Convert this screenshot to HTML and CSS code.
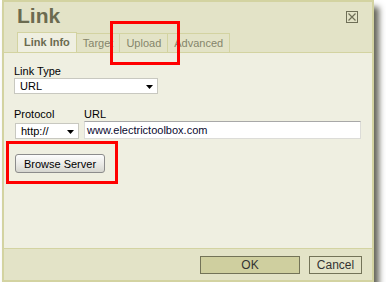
FILE: index.html
```html
<!DOCTYPE html>
<html>
<head>
<meta charset="UTF-8">
<meta name="viewport" content="width=device-width, initial-scale=1">
<link rel="stylesheet" href="styles.css">
</head>
<body>

<div class="dialog">
  <div class="head">
    <div class="title-row">
      <h2 class="title">Link</h2>
      <span class="close">
        <svg width="12" height="12" viewBox="0 0 12 12">
          <rect x="0.5" y="0.5" width="11" height="11" fill="none" stroke="#6f6f57"/>
          <path d="M2.5 2.5 L9.5 9.5 M9.5 2.5 L2.5 9.5" stroke="#6f6f57" stroke-width="1.2"/>
        </svg>
      </span>
    </div>
    <div class="tabs">
      <a class="tab active">Link Info</a>
      <a class="tab">Target</a>
      <a class="tab">Upload</a>
      <a class="tab">Advanced</a>
    </div>
  </div>

  <div class="content">
    <label class="lbl">Link Type</label>
    <div class="select type-select">
      <span>URL</span>
      <svg class="arrow" width="7" height="4" viewBox="0 0 7 4"><path d="M0 0 H7 L3.5 4 Z" fill="#000"/></svg>
    </div>

    <div class="url-row">
      <div class="col">
        <label class="lbl">Protocol</label>
        <div class="select proto-select">
          <span>http://</span>
          <svg class="arrow" width="7" height="4" viewBox="0 0 7 4"><path d="M0 0 H7 L3.5 4 Z" fill="#000"/></svg>
        </div>
      </div>
      <div class="col grow">
        <label class="lbl">URL</label>
        <div class="input">www.electrictoolbox.com</div>
      </div>
    </div>

    <button class="browse">Browse Server</button>
  </div>

  <div class="footer">
    <button class="btn ok">OK</button>
    <button class="btn cancel">Cancel</button>
  </div>
</div>

<div class="mark mark-upload"></div>
<div class="mark mark-browse"></div>

</body>
</html>
```

FILE: styles.css
```css
body {
  margin: 0;
  background: #fff;
  font-family: "Liberation Sans", Arial, sans-serif;
  font-size: 11px;
  color: #000;
}

.dialog {
  margin-left: 2px;
  width: 372px;
  height: 282px;
  box-sizing: border-box;
  border: 2px solid #d3d3a1;
  display: flex;
  flex-direction: column;
  box-shadow: 5px 7px 6px rgba(35, 35, 20, 0.7);
}

.head {
  background: #e3e3c7;
  padding: 0 0 0 13px;
}

.title-row {
  display: flex;
  justify-content: space-between;
  height: 31px;
}

.title {
  margin: 0;
  padding-top: 2px;
  font-size: 21px;
  font-weight: bold;
  color: #6b6b50;
}

.close {
  margin: 9px 14px 0 0;
  height: 12px;
}

.tabs {
  display: flex;
  margin-bottom: -1px;
}

.tab {
  height: 19px;
  line-height: 19px;
  padding: 0 6px;
  border: 1px solid #d3d3a1;
  border-bottom: none;
  border-left: none;
  color: #85856b;
  background: #e3e3c7;
}

.tab:first-child { border-left: 1px solid #d3d3a1; }

.tab.active {
  background: #efefe1;
  color: #6b6b50;
  font-weight: bold;
  height: 20px;
  margin-top: -1px;
}

.content {
  flex: 1;
  background: #efefe1;
  border-top: 1px solid #d3d3a1;
  padding: 12px 10px 0 10px;
}

.lbl {
  display: block;
  line-height: 13px;
  color: #000;
}

.select {
  position: relative;
  background: #fff;
  border: 1px solid #c8c8c0;
  height: 14px;
  line-height: 14px;
  padding-left: 5px;
}

.select .arrow {
  position: absolute;
  right: 4px;
  top: 6px;
}

.type-select { width: 137px; }

.url-row {
  display: flex;
  gap: 5px;
  margin-top: 14px;
}

.col { display: flex; flex-direction: column; }
.grow { flex: 1; }

.proto-select {
  width: 57px;
  margin: 2px 0 0 1px;
}

.input {
  height: 16px;
  line-height: 16px;
  background: #fff;
  border: 1px solid #dcdcd8;
  border-top-color: #a8a8a8;
  padding-left: 2px;
  margin-right: 1px;
  color: #0a0a30;
}

.browse {
  margin: 15px 0 0 1px;
  width: 90px;
  height: 19px;
  padding: 0;
  font-family: inherit;
  font-size: 11px;
  color: #000;
  border: 1px solid #8c8c8c;
  border-radius: 3px;
  background: linear-gradient(#fdfdfd, #e8e8e4 60%, #d6d6d0);
}

.footer {
  height: 32px;
  background: #e3e3c7;
  border-top: 1px solid #d3d3a1;
  display: flex;
  justify-content: flex-end;
  align-items: flex-start;
  gap: 9px;
  padding: 7px 10px 0 0;
  box-sizing: border-box;
}

.btn {
  height: 18px;
  padding: 0;
  font-family: inherit;
  font-size: 12px;
  color: #333;
  border: 1px solid #737358;
  border-radius: 0;
}

.ok { width: 100px; background: #cfcf9f; }
.cancel { width: 53px; background: #e3e3c7; }

.mark {
  position: absolute;
  border: 3px solid #f00;
  box-sizing: border-box;
}

.mark-upload { left: 110px; top: 21px; width: 70px; height: 44px; }
.mark-browse { left: 6px; top: 141px; width: 112px; height: 43px; }
```
